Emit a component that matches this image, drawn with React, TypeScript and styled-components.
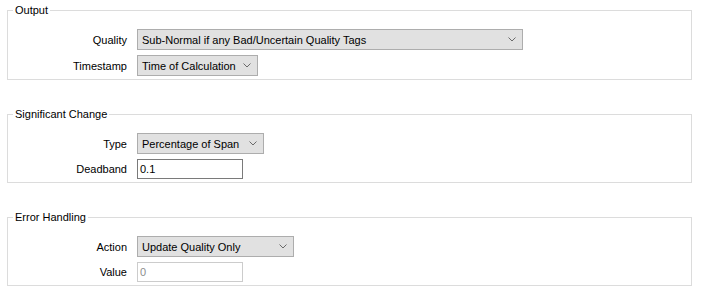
import React from 'react';
import styled, { createGlobalStyle } from 'styled-components';

const GlobalStyle = createGlobalStyle`
  html, body {
    margin: 0;
    padding: 0;
    background: #ffffff;
  }
  body {
    font-family: "Liberation Sans", Arial, sans-serif;
    font-size: 11px;
    color: #000;
  }
`;

type Field = {
  label: string;
  kind: 'combo' | 'text';
  value: string;
  width: number;
  disabled?: boolean;
};

type Group = {
  title: string;
  fields: Field[];
};

const groups: Group[] = [
  {
    title: 'Output',
    fields: [
      { label: 'Quality', kind: 'combo', value: 'Sub-Normal if any Bad/Uncertain Quality Tags', width: 386 },
      { label: 'Timestamp', kind: 'combo', value: 'Time of Calculation', width: 121 },
    ],
  },
  {
    title: 'Significant Change',
    fields: [
      { label: 'Type', kind: 'combo', value: 'Percentage of Span', width: 127 },
      { label: 'Deadband', kind: 'text', value: '0.1', width: 106 },
    ],
  },
  {
    title: 'Error Handling',
    fields: [
      { label: 'Action', kind: 'combo', value: 'Update Quality Only', width: 157 },
      { label: 'Value', kind: 'text', value: '0', width: 106, disabled: true },
    ],
  },
];

const Chevron = () => (
  <svg width="8" height="5" viewBox="0 0 8 5">
    <path d="M0.5 0.5 L4 4 L7.5 0.5" fill="none" stroke="#6a6a6a" strokeWidth="1" />
  </svg>
);

export default function App() {
  return (
    <>
      <GlobalStyle />
      <Page>
        {groups.map((g) => (
          <GroupBox key={g.title}>
            <Legend>{g.title}</Legend>
            <Rows>
              {g.fields.map((f) => (
                <Row key={f.label}>
                  <Label>{f.label}</Label>
                  {f.kind === 'combo' ? (
                    <Combo $width={f.width}>
                      <ComboText>{f.value}</ComboText>
                      <Chevron />
                    </Combo>
                  ) : (
                    <TextBox $width={f.width} $disabled={f.disabled}>
                      {f.value}
                    </TextBox>
                  )}
                </Row>
              ))}
            </Rows>
          </GroupBox>
        ))}
      </Page>
    </>
  );
}

const Page = styled.div`
  width: 706px;
  height: 298px;
  box-sizing: border-box;
  padding: 4px 14px 0 7px;
  display: flex;
  flex-direction: column;
  gap: 28px;
`;

const GroupBox = styled.fieldset`
  margin: 0;
  padding: 0 0 3px 0;
  border: 1px solid #dcdcdc;
  min-width: 0;
`;

const Legend = styled.legend`
  margin-left: 5px;
  padding: 0 2px 0 2px;
  line-height: 13px;
  font-size: 11px;
`;

const Rows = styled.div`
  padding-top: 12px;
  display: flex;
  flex-direction: column;
  gap: 5px;
`;

const Row = styled.div`
  display: grid;
  grid-template-columns: 119px auto;
  column-gap: 10px;
  align-items: center;
`;

const Label = styled.span`
  text-align: right;
  color: #000;
  white-space: nowrap;
`;

const Combo = styled.div<{ $width: number }>`
  width: ${(p) => p.$width}px;
  height: 21px;
  box-sizing: border-box;
  border: 1px solid #adadad;
  background: #e1e1e1;
  display: flex;
  align-items: center;
  justify-content: space-between;
  padding: 0 6px 0 4px;
`;

const ComboText = styled.span`
  white-space: nowrap;
`;

const TextBox = styled.div<{ $width: number; $disabled?: boolean }>`
  width: ${(p) => p.$width}px;
  height: 20px;
  box-sizing: border-box;
  border: 1px solid ${(p) => (p.$disabled ? '#cccccc' : '#7a7a7a')};
  background: #fff;
  color: ${(p) => (p.$disabled ? '#8d8d8d' : '#000')};
  display: flex;
  align-items: center;
  padding: 0 2px;
`;
